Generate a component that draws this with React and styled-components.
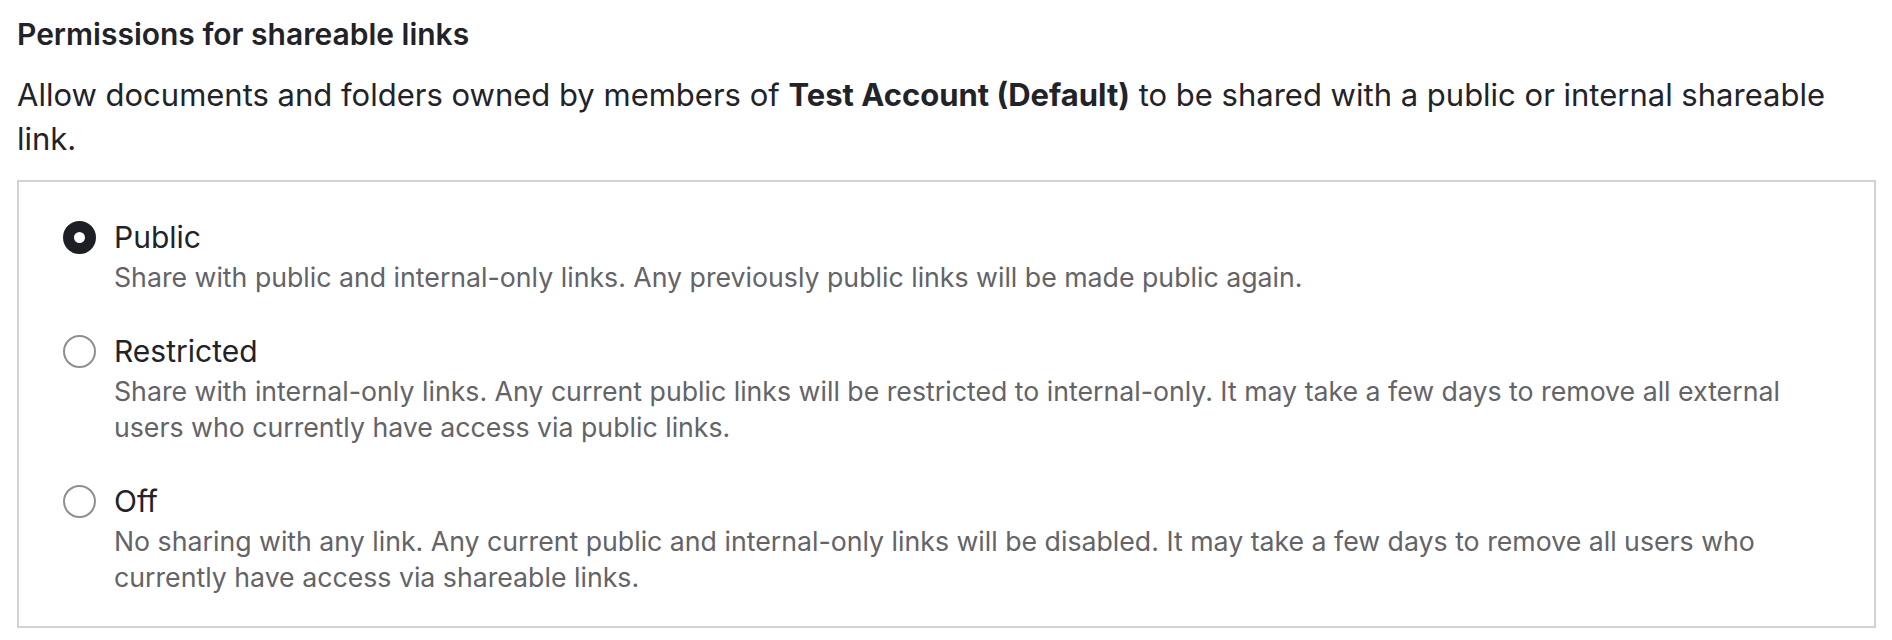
import React, { useState } from "react";
import styled, { createGlobalStyle } from "styled-components";

const GlobalStyle = createGlobalStyle`
  html, body { margin: 0; padding: 0; background: #ffffff; }
  body { font-family: Inter, "Liberation Sans", Arial, sans-serif; color: #222328; }
`;

const Page = styled.div`
  padding: 16px 16px 0 17px;
`;

const Heading = styled.h2`
  margin: 0;
  font-size: 30px;
  line-height: 36px;
  font-weight: 600;
  color: #222328;
`;

const Intro = styled.p`
  margin: 21px 0 0;
  font-size: 31px;
  line-height: 44px;
  color: #222328;
`;

const Emph = styled.strong`
  font-weight: 700;
`;

const OptionBox = styled.div`
  margin-top: 19px;
  border: 2px solid #d1d1d6;
  padding: 37px 40px 31px 44px;
  display: flex;
  flex-direction: column;
  gap: 38px;
`;

const Option = styled.label`
  display: grid;
  grid-template-columns: 33px 1fr;
  column-gap: 18px;
  cursor: pointer;
`;

const Radio = styled.span`
  box-sizing: border-box;
  width: 33px;
  height: 33px;
  margin-top: 2px;
  border-radius: 50%;
  border: ${(p) => (p.$checked ? "11px solid #1e1f24" : "2px solid #8e8e93")};
  background: #fff;
`;

const OptionText = styled.div`
  display: flex;
  flex-direction: column;
  gap: 4px;
`;

const Label = styled.span`
  font-size: 30px;
  line-height: 36px;
  color: #222328;
`;

const Desc = styled.span`
  font-size: 26.7px;
  line-height: 36px;
  color: #636368;
`;

const options = [
  {
    id: "public",
    label: "Public",
    desc: "Share with public and internal-only links. Any previously public links will be made public again.",
  },
  {
    id: "restricted",
    label: "Restricted",
    desc: "Share with internal-only links. Any current public links will be restricted to internal-only. It may take a few days to remove all external users who currently have access via public links.",
  },
  {
    id: "off",
    label: "Off",
    desc: "No sharing with any link. Any current public and internal-only links will be disabled. It may take a few days to remove all users who currently have access via shareable links.",
  },
];

export default function App() {
  const [value, setValue] = useState("public");
  return (
    <>
      <GlobalStyle />
      <Page>
        <Heading>Permissions for shareable links</Heading>
        <Intro>
          Allow documents and folders owned by members of <Emph>Test Account (Default)</Emph> to be shared with a public or internal shareable link.
        </Intro>
        <OptionBox role="radiogroup">
          {options.map((o) => (
            <Option key={o.id} onClick={() => setValue(o.id)}>
              <Radio $checked={value === o.id} role="radio" aria-checked={value === o.id} />
              <OptionText>
                <Label>{o.label}</Label>
                <Desc>{o.desc}</Desc>
              </OptionText>
            </Option>
          ))}
        </OptionBox>
      </Page>
    </>
  );
}
